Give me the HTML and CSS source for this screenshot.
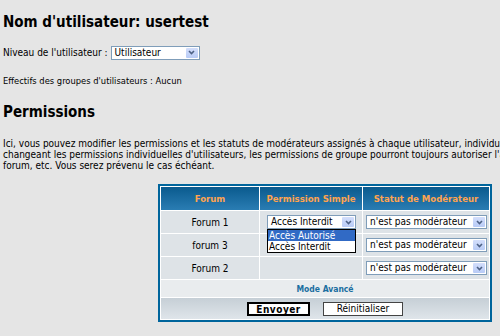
FILE: index.html
```html
<!DOCTYPE html>
<html lang="fr">
  <head>
    <meta charset="UTF-8" />
    <title>Permissions utilisateur</title>
    <link rel="stylesheet" href="styles.css">
  </head>
  <body>
    <div class="page">
      <h1 class="title">Nom d'utilisateur: usertest</h1>

      <div class="level">
        Niveau de l'utilisateur :
        <span class="select select-level">
          <span class="select-text">Utilisateur</span>
          <span class="select-btn"><svg width="7" height="5" viewBox="0 0 7 5"><polyline points="1,1 3.5,3.5 6,1" fill="none" stroke="#4d6185" stroke-width="1.6"/></svg></span>
        </span>
      </div>

      <p class="groups">Effectifs des groupes d'utilisateurs : Aucun</p>

      <h1 class="title title-perm">Permissions</h1>

      <p class="intro">Ici, vous pouvez modifier les permissions et les statuts de modérateurs assignés à chaque utilisateur, individuellement.<br>changeant les permissions individuelles d'utilisateurs, les permissions de groupe pourront toujours autoriser l'accès<br>forum, etc. Vous serez prévenu le cas échéant.</p>

      <table class="forumline">
        <tr>
          <th class="col-forum">Forum</th>
          <th class="col-perm">Permission Simple</th>
          <th class="col-mod">Statut de Modérateur</th>
        </tr>
        <tr>
          <td class="row name">Forum 1</td>
          <td class="row perm-cell">
            <span class="select select-perm">
              <span class="select-text">Accès Interdit</span>
              <span class="select-btn"><svg width="7" height="5" viewBox="0 0 7 5"><polyline points="1,1 3.5,3.5 6,1" fill="none" stroke="#4d6185" stroke-width="1.6"/></svg></span>
            </span>
            <div class="dropdown">
              <div class="option selected">Accès Autorisé</div>
              <div class="option">Accès Interdit</div>
            </div>
          </td>
          <td class="row">
            <span class="select select-mod">
              <span class="select-text">n'est pas modérateur</span>
              <span class="select-btn"><svg width="7" height="5" viewBox="0 0 7 5"><polyline points="1,1 3.5,3.5 6,1" fill="none" stroke="#4d6185" stroke-width="1.6"/></svg></span>
            </span>
          </td>
        </tr>
        <tr>
          <td class="row name">forum 3</td>
          <td class="row"></td>
          <td class="row">
            <span class="select select-mod">
              <span class="select-text">n'est pas modérateur</span>
              <span class="select-btn"><svg width="7" height="5" viewBox="0 0 7 5"><polyline points="1,1 3.5,3.5 6,1" fill="none" stroke="#4d6185" stroke-width="1.6"/></svg></span>
            </span>
          </td>
        </tr>
        <tr>
          <td class="row name">Forum 2</td>
          <td class="row"></td>
          <td class="row">
            <span class="select select-mod">
              <span class="select-text">n'est pas modérateur</span>
              <span class="select-btn"><svg width="7" height="5" viewBox="0 0 7 5"><polyline points="1,1 3.5,3.5 6,1" fill="none" stroke="#4d6185" stroke-width="1.6"/></svg></span>
            </span>
          </td>
        </tr>
        <tr>
          <td class="row-mode" colspan="3"><a href="#">Mode Avancé</a></td>
        </tr>
        <tr>
          <td class="cat-bottom" colspan="3">
            <input type="submit" class="btn btn-main" value="Envoyer" />
            <input type="reset" class="btn" value="Réinitialiser" />
          </td>
        </tr>
      </table>
    </div>
  </body>
</html>
```

FILE: styles.css
```css
* {
  margin: 0;
  padding: 0;
}

html, body {
  overflow: hidden;
}

body {
  background-color: #e5e5e5;
  font-family: "DejaVu Sans Condensed", "DejaVu Sans", sans-serif;
  font-size: 10px;
  color: #000;
}

.page {
  width: 644px;
  padding: 12px 3px 0;
}

.title {
  font-size: 15px;
  font-weight: bold;
  line-height: 20px;
}

.title-perm {
  margin-top: 16px;
}

.level {
  margin-top: 13px;
  display: flex;
  align-items: center;
  gap: 3px;
  height: 15px;
}

.groups {
  margin-top: 15px;
  line-height: 11px;
  font-size: 9.3px;
}

.intro {
  margin-top: 16px;
  line-height: 11px;
  white-space: nowrap;
}

/* fake select boxes */
.select {
  display: inline-flex;
  align-items: stretch;
  box-sizing: border-box;
  height: 14px;
  border: 1px solid #7f9db9;
  background: #fff;
  padding: 1px;
  vertical-align: middle;
}

.select-text {
  flex: 1;
  padding-left: 2px;
  line-height: 10px;
  white-space: nowrap;
  overflow: hidden;
}

.select-btn {
  width: 12px;
  display: flex;
  align-items: center;
  justify-content: center;
  background: linear-gradient(#d3defb, #b8cbf6);
  border-radius: 1px;
}

.select-level {
  width: 89px;
}

.select-perm {
  width: 89px;
}

.select-mod {
  width: 121px;
}

/* table */
.forumline {
  margin: 13px auto 0;
  width: 334px;
  border: 2px solid #00659c;
  border-spacing: 1px;
  background-color: #fff;
}

.forumline th {
  height: 23px;
  color: #ffa34f;
  font-size: 9.5px;
  font-weight: bold;
  background: linear-gradient(#0a5a8e, #2a7db3);
  text-align: center;
}

.col-forum {
  width: 98px;
}

.col-perm {
  width: 102px;
}

.row {
  height: 22px;
  background-color: #dee3e7;
  padding-left: 3px;
}

.name {
  text-align: center;
  padding-left: 0;
}

.perm-cell {
  position: relative;
  padding-left: 7px;
}

.dropdown {
  position: absolute;
  left: 7px;
  top: 18px;
  width: 89px;
  box-sizing: border-box;
  border: 1px solid #000;
  background: #fff;
  z-index: 2;
}

.option {
  line-height: 11px;
  padding-left: 1px;
  white-space: nowrap;
}

.option.selected {
  background-color: #316ac5;
  color: #fff;
}

.row-mode {
  height: 17px;
  text-align: center;
  background-color: #e9ecee;
}

.row-mode a {
  color: #1a6ea0;
  text-decoration: none;
  font-weight: bold;
  font-size: 8.5px;
}

.cat-bottom {
  height: 21px;
  text-align: center;
  background: linear-gradient(#c6cfd6, #dfe5ea);
}

.btn {
  font-family: "DejaVu Sans Condensed", "DejaVu Sans", sans-serif;
  font-size: 10px;
  height: 14px;
  width: 80px;
  background: #fff;
  border: 1px solid #444;
  margin: 0 5px;
  vertical-align: middle;
}

.btn-main {
  width: 63px;
  font-weight: bold;
  border: 2px solid #000;
  letter-spacing: 0.5px;
}
```
